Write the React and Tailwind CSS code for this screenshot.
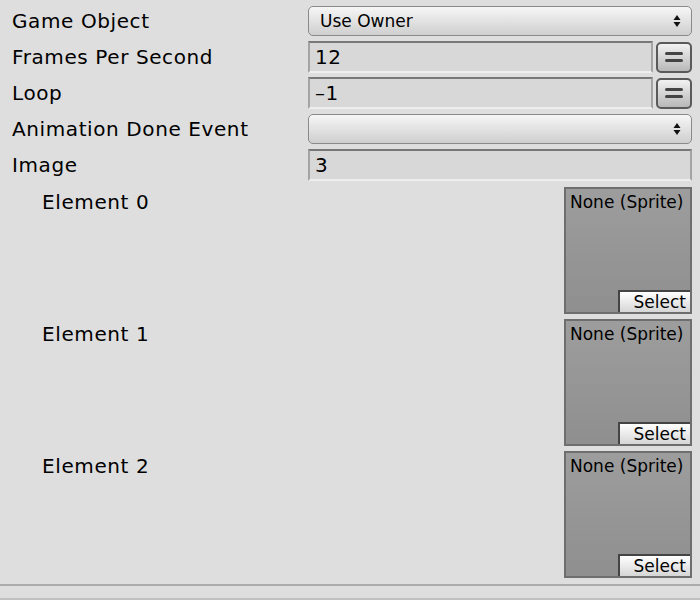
import React from "react";

const font = { fontFamily: '"DejaVu Sans", "Liberation Sans", sans-serif' };

function Arrows() {
  return (
    <svg width="8" height="14" viewBox="0 0 8 14" className="shrink-0">
      <path d="M4 1 L7.5 6 L0.5 6 Z" fill="#111" />
      <path d="M4 13 L7.5 8 L0.5 8 Z" fill="#111" />
    </svg>
  );
}

function Dropdown({ text }) {
  return (
    <div className="h-[30px] flex-1 flex items-center justify-between pl-[11px] pr-[10px] rounded-[5px] border-[1.5px] border-[#8a8a8a] bg-gradient-to-b from-[#f6f6f6] to-[#cfcfcf] text-[17px] text-black">
      <span className="pt-[2px]">{text}</span>
      <Arrows />
    </div>
  );
}

function Field({ text }) {
  return (
    <div className="h-[32px] flex-1 flex items-center pl-[5px] bg-[#d8d8d8] border-t-[2px] border-t-[#787878] border-x-[2px] border-x-[#a4a4a4] border-b-[2px] border-b-[#eeeeee] text-[20px] tracking-[0.6px] text-black">
      {text}
    </div>
  );
}

function EqButton() {
  return (
    <div className="w-[36px] h-[31px] ml-[3px] rounded-[5px] border-[2px] border-[#5a5a5a] bg-gradient-to-b from-[#f2f2f2] to-[#b8b8b8] flex flex-col items-center justify-center gap-[4px]">
      <div className="w-[18px] h-[3px] rounded-full bg-[#444]" />
      <div className="w-[18px] h-[3px] rounded-full bg-[#444]" />
    </div>
  );
}

function Row({ label, children }) {
  return (
    <div className="h-[36px] flex items-center">
      <div className="w-[296px] text-[20px] tracking-[0.6px] text-black">{label}</div>
      <div className="flex-1 flex items-center">{children}</div>
    </div>
  );
}

function Element({ label }) {
  return (
    <div className="h-[132px] flex items-start">
      <div className="flex-1 pl-[30px] pt-[4px] text-[20px] tracking-[0.6px] text-black">{label}</div>
      <div className="mt-[4px] w-[128px] h-[127px] border-[2px] border-[#6e6e6e] bg-gradient-to-b from-[#9d9d9d] to-[#8f8f8f] flex flex-col justify-between">
        <div className="pl-[4px] pt-[1px] text-[17px] text-black">None (Sprite)</div>
        <div className="self-end w-[72px] h-[22px] border-l-[2px] border-t-[2px] border-[#444] bg-gradient-to-b from-[#ffffff] to-[#d6d6d6] text-[17px] text-black flex items-center justify-end pr-[4px] leading-none">
          Select
        </div>
      </div>
    </div>
  );
}

export default function App() {
  return (
    <div className="w-[700px] h-[600px] bg-[#dedede] overflow-hidden flex flex-col" style={font}>
      <div className="pt-[3px] pl-[12px] pr-[8px]">
        <Row label="Game Object">
          <Dropdown text="Use Owner" />
        </Row>
        <Row label="Frames Per Second">
          <Field text="12" />
          <EqButton />
        </Row>
        <Row label="Loop">
          <Field text="–1" />
          <EqButton />
        </Row>
        <Row label="Animation Done Event">
          <Dropdown text="" />
        </Row>
        <Row label="Image">
          <Field text="3" />
        </Row>
        <Element label="Element 0" />
        <Element label="Element 1" />
        <Element label="Element 2" />
      </div>
      <div className="mt-[5px] h-[2px] bg-[#aaaaaa]" />
      <div className="h-[12px] bg-[#dedede]" />
      <div className="h-[2px] bg-[#c0c0c0]" />
    </div>
  );
}
